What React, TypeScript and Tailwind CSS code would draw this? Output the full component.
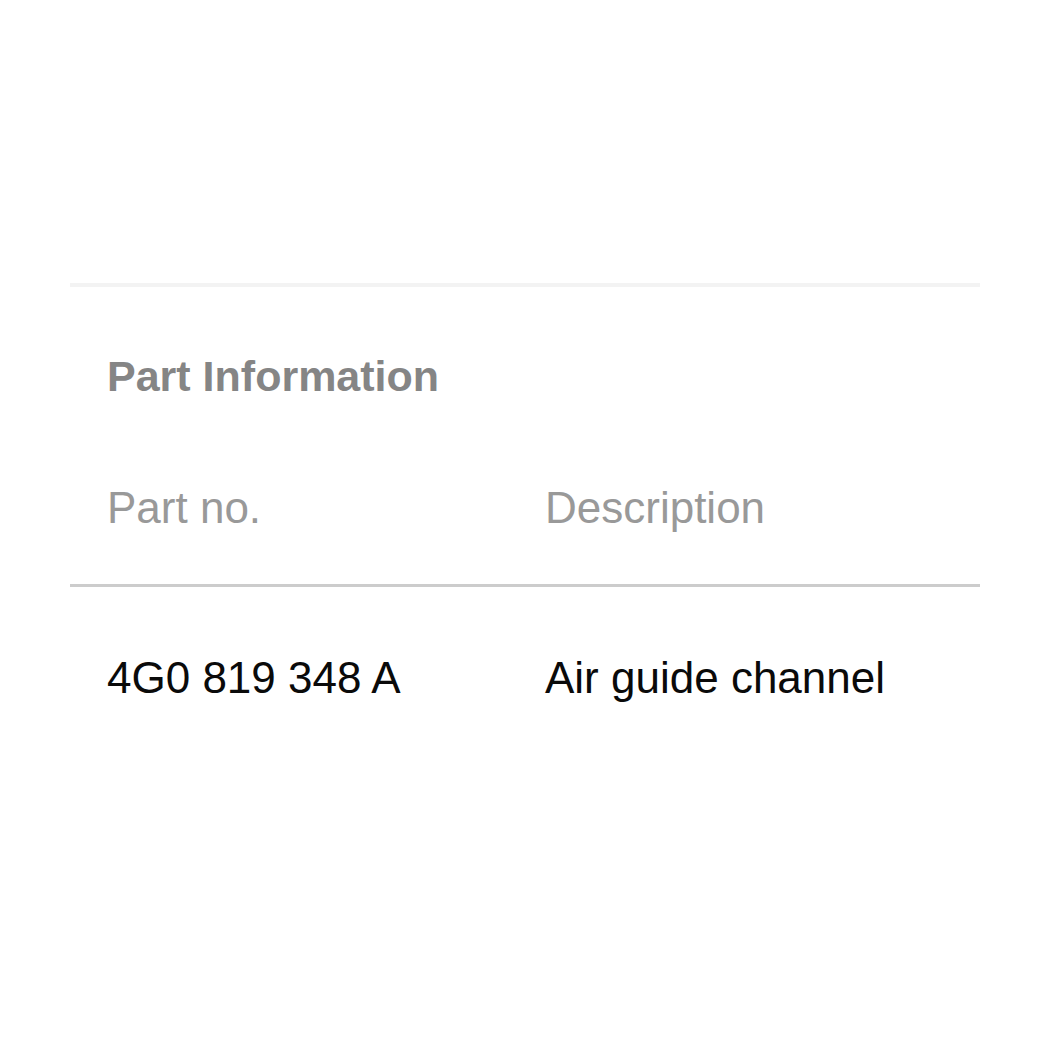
export default function App() {
  return (
    <div className="min-h-[1050px] w-[1050px] bg-white pt-[283px] font-['Liberation_Sans',Arial,sans-serif]">
      <div className="ml-[70px] w-[910px]">
        <div className="h-[4px] bg-[#f3f3f3]" />
        <h2 className="mt-[67px] pl-[37px] text-[43px] leading-[44px] font-bold text-[#858585]">
          Part Information
        </h2>
        <table className="mt-[88px] w-full border-collapse text-[44px] leading-[44px]">
          <thead>
            <tr className="border-b-[3px] border-[#cccccc] text-left text-[#999999]">
              <th className="w-[475px] pb-[54px] pl-[37px] font-normal">Part no.</th>
              <th className="pb-[54px] font-normal">Description</th>
            </tr>
          </thead>
          <tbody>
            <tr className="text-[#0a0a0a]">
              <td className="pt-[69px] pl-[37px]">4G0 819 348 A</td>
              <td className="pt-[69px]">Air guide channel</td>
            </tr>
          </tbody>
        </table>
      </div>
    </div>
  );
}
